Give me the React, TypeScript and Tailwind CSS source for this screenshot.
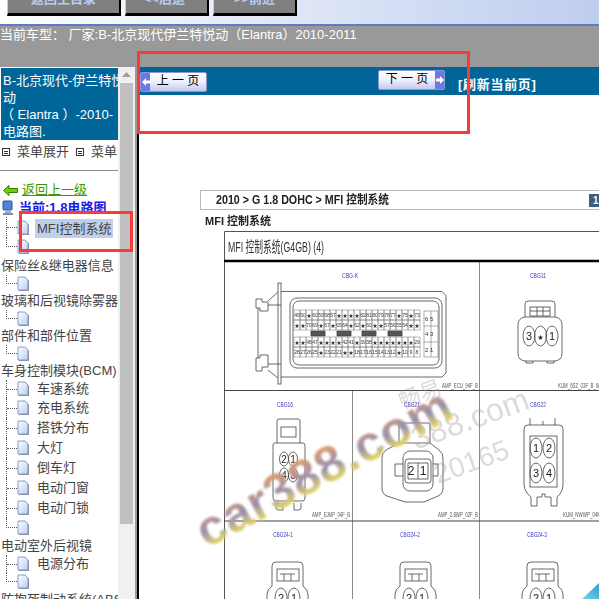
const rows = [
  { kind: "head", label: "保险丝&继电器信息", h: "h-[19px]" },
  { kind: "child", label: "", h: "h-[17px]", last: true },
  { kind: "head", label: "玻璃和后视镜除雾器", h: "h-[18px]" },
  { kind: "child", label: "", h: "h-[17px]", last: true },
  { kind: "head", label: "部件和部件位置", h: "h-[18px]" },
  { kind: "child", label: "", h: "h-[17px]", last: true },
  { kind: "head", label: "车身控制模块(BCM)", h: "h-[18px]" },
  { kind: "child", label: "车速系统", h: "h-[18px]" },
  { kind: "child", label: "充电系统", h: "h-[20px]" },
  { kind: "child", label: "搭铁分布", h: "h-[20px]" },
  { kind: "child", label: "大灯", h: "h-[20px]" },
  { kind: "child", label: "倒车灯", h: "h-[20px]" },
  { kind: "child", label: "电动门窗", h: "h-[20px]" },
  { kind: "child", label: "电动门锁", h: "h-[20px]" },
  { kind: "child", label: "", h: "h-[19px]", last: true },
  { kind: "head", label: "电动室外后视镜", h: "h-[18px]" },
  { kind: "child", label: "电源分布", h: "h-[18px]" },
  { kind: "child", label: "", h: "h-[18px]", last: true },
  { kind: "head", label: "防抱死制动系统(ABS)", h: "h-[18px]" },
];

const pinRows = [
  { y: 309, pins: ["49", "50", "★", "60", "59", "58", "57", "★", "★", "★", "★", "82", "81", "80", "79", "78", "77", "★", "75", "★", "73"] },
  { y: 319, pins: ["★", "★", "70", "69", "★", "67", "★", "65", "64", "★", "62", "★", "60", "★", "★", "57", "56", "55", "54", "★", "★"] },
  { y: 336, pins: ["★", "★", "48", "47", "★", "★", "★", "★", "42", "41", "★", "39", "38", "★", "★", "★", "★", "★", "★", "★", "29"] },
  { y: 346, pins: ["28", "27", "26", "25", "★", "23", "22", "21", "★", "★", "18", "17", "16", "15", "14", "13", "12", "★", "10", "9", "8"] },
];

function DocIcon() {
  return (
    <svg width="13" height="16" viewBox="0 0 13 16" className="shrink-0">
      <defs>
        <linearGradient id="doc" x1="0" y1="0" x2="1" y2="1">
          <stop offset="0" stopColor="#ffffff" />
          <stop offset="1" stopColor="#b9cdf0" />
        </linearGradient>
      </defs>
      <path d="M2 2h7l3 3v10H2z" fill="#9a9aa8" />
      <path d="M1 1h7l3 3v10H1z" fill="url(#doc)" stroke="#6f86b8" strokeWidth="0.8" />
    </svg>
  );
}

function Branch({ last }: { last?: boolean }) {
  if (last) {
    return <div className="self-start h-1/2 w-[11px] border-l border-b border-dotted border-[#555]" />;
  }
  return (
    <div className="self-stretch w-[11px] flex items-center border-l border-dotted border-[#555]">
      <div className="w-full border-t border-dotted border-[#555]" />
    </div>
  );
}

function MenuBox() {
  return (
    <span className="shrink-0 w-[8px] h-[8px] border border-[#333] flex flex-col justify-center">
      <span className="block mx-[1px] h-[3px] border-y border-[#333]" />
    </span>
  );
}

function PageButton({ label, next }: { label: string; next?: boolean }) {
  const cap = (
    <span className="w-[9px] self-stretch bg-[#6c78e4] flex items-center justify-center">
      <svg width="8" height="8" viewBox="0 0 8 8">
        <path d={next ? "M0 2.500h4V0l4 4-4 4V5.500H0z" : "M8 2.500H4V0L0 4l4 4V5.500h4z"} fill="#fff" />
      </svg>
    </span>
  );
  return (
    <div className="w-[67px] h-[20px] flex items-stretch border border-[#8b97d0] rounded-[2px] bg-gradient-to-b from-[#ffffff] via-[#eef0fa] to-[#c2c9ee] overflow-hidden">
      {!next && cap}
      <span className="flex-1 text-center text-[12px] leading-[17px] text-black whitespace-pre">{label}</span>
      {next && cap}
    </div>
  );
}

function Connector3({ x, a, b }: { x: number; a: string; b: string }) {
  return (
    <g fill="none" stroke="#444" strokeWidth="0.8">
      <path d={`M${x + 5} 585v-20q0-4 4-4h23q4 0 4 4v20`} />
      <path d={`M${x} 599v-6q0-4 5-8M${x + 41} 599v-6q0-4-5-8`} />
      <rect x={x + 10} y={568} width={22} height={12} />
      <path d={`M${x + 13} 573h15M${x + 17} 573v7M${x + 24} 573v7`} />
      <ellipse cx={x + 14} cy={597} rx={6} ry={10} />
      <ellipse cx={x + 27} cy={597} rx={6} ry={10} />
      <text x={x + 14} y={601} fontSize="11" fill="#222" stroke="none" textAnchor="middle">{a}</text>
      <text x={x + 27} y={601} fontSize="11" fill="#222" stroke="none" textAnchor="middle">{b}</text>
    </g>
  );
}

function Drawing() {
  const small = { fontSize: 7, fill: "#555", textLength: 42, lengthAdjust: "spacingAndGlyphs" as const };
  const blue = { fontSize: 8, fill: "#3a3ab8", textLength: 16, lengthAdjust: "spacingAndGlyphs" as const };
  const blueLong = { fontSize: 8, fill: "#3a3ab8", textLength: 20, lengthAdjust: "spacingAndGlyphs" as const };
  return (
    <svg viewBox="139 94 460 505" width="460" height="505" className="block">
      <defs>
        <filter id="soft" x="-5%" y="-5%" width="110%" height="110%">
          <feGaussianBlur stdDeviation="0.5" />
        </filter>
        <filter id="mark" x="-5%" y="-5%" width="110%" height="110%">
          <feGaussianBlur stdDeviation="1" />
        </filter>
        <linearGradient id="logo" gradientUnits="userSpaceOnUse" x1="0" y1="-38" x2="0" y2="2">
          <stop offset="0" stopColor="#e6a066" />
          <stop offset="0.55" stopColor="#9a8fae" />
          <stop offset="1" stopColor="#f0e25a" />
        </linearGradient>
        <linearGradient id="corner" x1="0" y1="1" x2="1" y2="0">
          <stop offset="0" stopColor="#7fd4e8" />
          <stop offset="1" stopColor="#2f9fd0" />
        </linearGradient>
      </defs>

      <g filter="url(#soft)">
        <rect x="200.500" y="189.500" width="420" height="19" fill="#fff" stroke="#bbb" />
        <text x="216" y="203" fontSize="12" fontWeight="700" fill="#222" textLength="173" lengthAdjust="spacingAndGlyphs">2010 &gt; G 1.8 DOHC &gt; MFI 控制系统</text>
        <rect x="589" y="193" width="12" height="13" fill="#3f5f80" />
        <text x="593" y="203" fontSize="10" fontWeight="700" fill="#fff">1</text>
        <text x="205" y="224" fontSize="11" fontWeight="700" fill="#222">MFI 控制系统</text>

        <path d="M224.500 620V230.500H620" fill="none" stroke="#555" />
        <text x="228" y="251" fontSize="15" fill="#333" textLength="96" lengthAdjust="spacingAndGlyphs">MFI 控制系统(G4GB) (4)</text>
        <path d="M224 260h400" stroke="#000" strokeWidth="2.500" />
        <path d="M479.500 261V620M352.500 389V620" stroke="#888" />
        <path d="M224 389.500h400M224 520h400" stroke="#444" />

        <text x="342" y="277" {...blue}>CBG-K</text>
        <g fill="none" stroke="#444" strokeWidth="0.8">
          <rect x="278" y="282" width="3" height="101" />
          <path d="M281 290.500H442l4 4V372l-4 4H281" />
          <rect x="290" y="297" width="152" height="70" rx="7" />
          <rect x="293" y="300" width="146" height="64" rx="6" />
          <path d="M268 300l10-9M268 304h13M268 363h13M268 369l10 8" />
          <path d="M256 298h6v3h6v9h-8v-3h-4zM256 357h4v-3h8v12h-6v4h-6z" />
          <path d="M258 307v50" />
          <path d="M311 330h14v5h-14zM337 330h14v5h-14zM362 330h14v5h-14zM388 330h14v5h-14z" fill="#555" />
        </g>
        {pinRows.map((r) =>
          r.pins.map((p, i) => (
            <g key={`${r.y}-${i}`}>
              <rect x={294 + i * 6} y={r.y} width="6" height="10" fill="none" stroke="#777" strokeWidth="0.5" />
              <text x={297 + i * 6} y={r.y + 7} fontSize="5" fill="#333" textAnchor="middle">{p}</text>
            </g>
          )),
        )}
        <g fill="none" stroke="#777" strokeWidth="0.6">
          <rect x="424" y="310" width="14" height="46" />
          <path d="M431 310v46M424 325h14M424 341h14" />
        </g>
        <text x="425" y="320" fontSize="6" fill="#333">6 5</text>
        <text x="425" y="335" fontSize="6" fill="#333">4 3</text>
        <text x="425" y="351" fontSize="6" fill="#333">2 1</text>
        <text x="442" y="387" {...small} textLength="36">AMP_ECU_94F_B</text>

        <text x="530" y="277" {...blue}>CBG11</text>
        <g fill="none" stroke="#444" strokeWidth="0.8">
          <path d="M525 316v-13q0-3 3-3h24q3 0 3 3v13" />
          <rect x="530" y="306" width="20" height="9" />
          <path d="M530 310h20M537 306v9M543 306v9" />
          <path d="M525 316h30q7 1 7 8v28q0 8-8 8h-28q-8 0-8-8v-28q0-7 7-8z" />
          <path d="M533 360v2h-7v-2M554 360v2h-7v-2" />
          <ellipse cx="529" cy="335" rx="6" ry="10" />
          <ellipse cx="540.500" cy="335" rx="6" ry="10" />
          <ellipse cx="552" cy="335" rx="6" ry="10" />
        </g>
        <text x="529" y="339" fontSize="11" fill="#222" textAnchor="middle">3</text>
        <text x="540.500" y="338" fontSize="6" fill="#222" textAnchor="middle">★</text>
        <text x="552" y="339" fontSize="11" fill="#222" textAnchor="middle">1</text>
        <text x="558" y="387" {...small}>KUM_6SZ_03F_B_W</text>

        <text x="277" y="406" {...blue}>CBG16</text>
        <g fill="none" stroke="#444" strokeWidth="0.8">
          <path d="M277 442v-22q0-2 2-2h19q2 0 2 2v22" />
          <rect x="281" y="426" width="15" height="10" />
          <path d="M274 442h29q2 0 2 3v52q0 3-3 3h-26q-3 0-3-3v-52q0-3 1-3z" />
          <path d="M276 502v5q0 2 3 2h4v-7M301 502v5q0 2-3 2h-4v-7" />
          <ellipse cx="284" cy="458" rx="4.500" ry="7" />
          <ellipse cx="293" cy="458" rx="4.500" ry="7" />
          <ellipse cx="284" cy="474" rx="4.500" ry="7" />
          <ellipse cx="293" cy="474" rx="4.500" ry="7" />
        </g>
        <text x="284" y="462" fontSize="10" fill="#222" textAnchor="middle">2</text>
        <text x="293" y="462" fontSize="10" fill="#222" textAnchor="middle">1</text>
        <text x="284" y="478" fontSize="10" fill="#222" textAnchor="middle">4</text>
        <text x="293" y="478" fontSize="10" fill="#222" textAnchor="middle">3</text>
        <text x="312" y="516" {...small} textLength="38">AMP_EJMP_04F_B</text>

        <text x="404" y="406" {...blue}>CBG21</text>
        <g fill="none" stroke="#444" strokeWidth="0.8">
          <path d="M399 442v-18q0-2 2-2h27q2 0 2 2v18" />
          <path d="M399 442h31l9 7q4 3 4 8v30q0 6-5 8l-14 6h-19l-18-6q-5-2-5-8v-30q0-5 4-8z" />
          <rect x="403" y="450" width="30" height="40" rx="7" />
          <rect x="405" y="458" width="26" height="24" rx="3" />
          <path d="M408 462h20v16h-20zM418 462v16" />
          <path d="M403 463h-8v12h8M433 463h5v12h-5" />
        </g>
        <text x="411" y="474" fontSize="12" fill="#222" textAnchor="middle">2</text>
        <text x="423" y="474" fontSize="12" fill="#222" textAnchor="middle">1</text>
        <text x="438" y="516" {...small} textLength="40">AMP_2.8WP_02F_B</text>

        <text x="530" y="406" {...blue}>CBG22</text>
        <g fill="none" stroke="#444" strokeWidth="0.8">
          <path d="M530 424v-7M543 424v-4M555 424v-7" />
          <path d="M528 424h31q4 0 4 4v56q0 5-3 9l-3 3v9h-6v-9h-6v-3h-3v3h-5v9h-6v-9l-4-4q-3-4-3-9v-55q0-4 4-4z" />
          <rect x="530" y="435" width="27" height="51" />
          <ellipse cx="536" cy="447" rx="6" ry="10" />
          <ellipse cx="549" cy="447" rx="6" ry="10" />
          <ellipse cx="536" cy="472" rx="6" ry="10" />
          <ellipse cx="549" cy="472" rx="6" ry="10" />
        </g>
        <text x="536" y="451" fontSize="11" fill="#222" textAnchor="middle">1</text>
        <text x="549" y="451" fontSize="11" fill="#222" textAnchor="middle">2</text>
        <text x="536" y="476" fontSize="11" fill="#222" textAnchor="middle">3</text>
        <text x="549" y="476" fontSize="11" fill="#222" textAnchor="middle">4</text>
        <text x="563" y="516" {...small} textLength="38">KUM_NWWP_04M</text>

        <text x="273" y="536" {...blueLong}>CBG24-1</text>
        <text x="400" y="536" {...blueLong}>CBG24-2</text>
        <text x="527" y="536" {...blueLong}>CBG24-3</text>
        <Connector3 x={267} a="2" b="1" />
        <Connector3 x={395} a="2" b="1" />
        <Connector3 x={522} a="2" b="1" />
      </g>

      <g fill="#999" opacity="0.35" fontFamily="Liberation Sans, Noto Sans CJK SC, sans-serif" filter="url(#soft)">
        <text transform="translate(402 408) rotate(-20)" fontSize="22">畅易</text>
        <text transform="translate(416 449) rotate(-20)" fontSize="32">388.com</text>
        <text transform="translate(438 483) rotate(-20)" fontSize="28">20165</text>
      </g>

      <text
        transform="translate(207 548) rotate(-28)"
        fontSize="50"
        fontWeight="700"
        fontFamily="Liberation Sans, sans-serif"
        fill="url(#logo)"
        textLength="282"
        lengthAdjust="spacing"
        filter="url(#mark)"
      >
        car388.com
      </text>

      <path d="M581 599l18-17v17z" fill="url(#corner)" filter="url(#soft)" />
    </svg>
  );
}

export default function App() {
  return (
    <div className="relative w-[599px] h-[599px] overflow-hidden bg-[#999999] font-['Liberation_Sans','Noto_Sans_CJK_SC',sans-serif]">
      {/* top buttons, cut off by the window edge */}
      <div className="h-[26px] overflow-hidden border-b-2 border-[#5a7bc8] bg-gradient-to-r from-[#ffffff] to-[#bfcdee]">
        <div className="flex gap-[4px] pl-[7px] mt-[-16px]">
          {[
            { t: "返回主目录", w: "w-[114px]" },
            { t: "<<后退-", w: "w-[84px]" },
            { t: ">>前进", w: "w-[84px]" },
          ].map((b) => (
            <div
              key={b.t}
              className={`${b.w} h-[32px] bg-[#808080] border-r-2 border-b-[3px] border-l border-black border-l-[#cccccc] flex items-center justify-center text-[13px] font-bold text-[#b8ccf0]`}
            >
              {b.t}
            </div>
          ))}
        </div>
      </div>

      <div className="h-[41px] pt-[2px] text-[13px] leading-[14px] text-white whitespace-nowrap">
        当前车型： 厂家:B-北京现代伊兰特悦动（Elantra）2010-2011
      </div>

      <div className="flex h-[532px]">
        {/* sidebar */}
        <div className="w-[118px] shrink-0 bg-white overflow-hidden text-[13px] text-[#444]">
          <div className="ml-[1px] mt-[1px] h-[72px] bg-[#006699] text-white whitespace-nowrap leading-[17px] pt-[4px] pl-[2px]">
            B-北京现代-伊兰特悦
            <br />
            动
            <br />
            <span className="ml-[-2px]">（ Elantra ）-2010-</span>
            <br />
            电路图.
          </div>
          <div className="h-[31px] pt-[3px] border-b border-[#888] flex items-start pl-[2px] whitespace-nowrap">
            <div className="flex items-center gap-[7px] h-[18px]">
              <MenuBox />
              <span>菜单展开</span>
              <MenuBox />
              <span>菜单收缩</span>
            </div>
          </div>
          <div className="h-[10px]" />
          <div className="h-[18px] flex items-center gap-[4px] pl-[3px] text-[#3a9a00] underline whitespace-nowrap">
            <svg width="15" height="11" viewBox="0 0 15 11">
              <path d="M0.500 5.500L6 0.500v3h8.500v4H6v3z" fill="#6fd000" stroke="#3a7a00" />
            </svg>
            返回上一级
          </div>
          <div className="h-[18px] flex items-center gap-[5px] pl-[2px] text-[#1a1ae0] font-bold underline whitespace-nowrap">
            <svg width="12" height="16" viewBox="0 0 12 16" className="shrink-0">
              <rect x="1" y="1" width="9" height="9" rx="1" fill="#4f86d8" stroke="#2a4f90" />
              <rect x="3" y="10" width="6" height="3" fill="#9ab0d0" />
              <rect x="1" y="13" width="10" height="2" fill="#7a8aa8" />
            </svg>
            当前:1.8电路图
          </div>
          <div className="h-[21px] flex items-center pl-[6px]">
            <Branch />
            <DocIcon />
            <span className="ml-[5px] h-[19px] mt-[1px] leading-[19px] px-[2px] bg-[#c0d0ea] text-[#444] whitespace-nowrap">MFI控制系统</span>
          </div>
          <div className="h-[18px] flex items-center pl-[6px]">
            <Branch last />
            <DocIcon />
          </div>
          {rows.map((r, i) =>
            r.kind === "head" ? (
              <div key={i} className={`${r.h} flex items-center whitespace-nowrap pl-[1px]`}>
                {r.label}
              </div>
            ) : (
              <div key={i} className={`${r.h} flex items-center pl-[6px] whitespace-nowrap`}>
                <Branch last={r.last} />
                <DocIcon />
                {r.label && <span className="ml-[7px]">{r.label}</span>}
              </div>
            ),
          )}
        </div>

        {/* sidebar scrollbar */}
        <div className="w-[17px] shrink-0 bg-[#f0f0f0] pt-[16px] pl-[2px] pr-[2px] relative">
          <svg width="9" height="5" viewBox="0 0 9 5" className="absolute top-[5px] left-[4px]">
            <path d="M4.500 0L9 5H0z" fill="#a0a0a0" />
          </svg>
          <div className="w-full h-[441px] bg-[#c0c0c0]" />
        </div>

        {/* page pane */}
        <div className="ml-[2px] flex-1 min-w-0 border-l-2 border-black bg-white overflow-hidden">
          <div className="h-[28px] bg-[#006699] flex items-start">
            <div className="mt-[5px] ml-[1px]">
              <PageButton label="上 一 页" />
            </div>
            <div className="mt-[3px] ml-[171px]">
              <PageButton label="下 一 页" next />
            </div>
            <div className="mt-[9px] ml-[13px] text-[13px] tracking-[0.7px] leading-[18px] font-bold text-white whitespace-nowrap">[刷新当前页]</div>
          </div>
          <Drawing />
        </div>
      </div>

      {/* red markup boxes drawn over the page */}
      <div className="absolute left-[137px] top-[51px] w-[333px] h-[83px] border-[3px] border-[#f93a3a]" />
      <div className="absolute left-[19px] top-[211px] w-[114px] h-[41px] border-[3px] border-[#f93a3a]" />
    </div>
  );
}
